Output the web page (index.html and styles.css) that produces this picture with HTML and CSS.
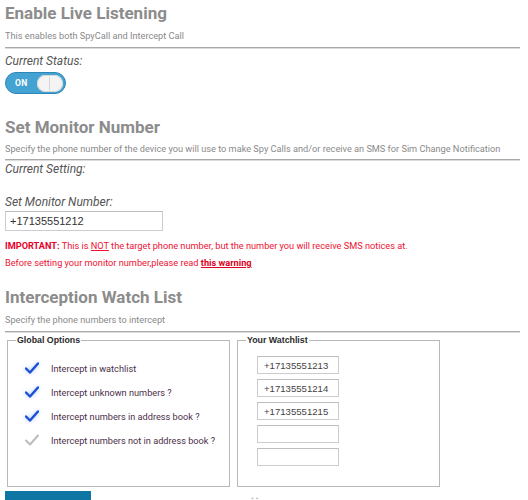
FILE: index.html
```html
<!DOCTYPE html>
<html>
<head>
<meta charset="utf-8">
<link rel="stylesheet" href="styles.css">
</head>
<body>
<div class="page">
  <section class="sec sec-live">
    <h2 class="title">Enable Live Listening</h2>
    <p class="sub">This enables both SpyCall and Intercept Call</p>
    <div class="rule"></div>
    <p class="label">Current Status:</p>
    <div class="toggle"><span class="on">ON</span><span class="knob"></span></div>
  </section>

  <section class="sec sec-monitor">
    <h2 class="title">Set Monitor Number</h2>
    <p class="sub">Specify the phone number of the device you will use to make Spy Calls and/or receive an SMS for Sim Change Notification</p>
    <div class="rule"></div>
    <p class="label label-tight">Current Setting:</p>
    <p class="label label-set">Set Monitor Number:</p>
    <input class="field field-monitor" type="text" value="+17135551212">
    <p class="warn"><b>IMPORTANT:</b> This is <u>NOT</u> the target phone number, but the number you will receive SMS notices at.</p>
    <p class="warn warn2">Before setting your monitor number,please read <a class="warnlink" href="#">this warning</a></p>
  </section>

  <section class="sec sec-watch">
    <h2 class="title">Interception Watch List</h2>
    <p class="sub">Specify the phone numbers to intercept</p>
    <div class="rule"></div>
    <div class="boxes">
      <fieldset class="box box-global">
        <legend>Global Options</legend>
        <ul class="opts">
          <li class="opt"><span class="chk on-chk"><svg viewBox="0 0 14 12" width="14" height="12"><path d="M1 6.5 L5 10.5 L13 1.5" fill="none" stroke="currentColor" stroke-width="2.4" stroke-linecap="round" stroke-linejoin="round"/></svg></span>Intercept in watchlist</li>
          <li class="opt"><span class="chk on-chk"><svg viewBox="0 0 14 12" width="14" height="12"><path d="M1 6.5 L5 10.5 L13 1.5" fill="none" stroke="currentColor" stroke-width="2.4" stroke-linecap="round" stroke-linejoin="round"/></svg></span>Intercept unknown numbers ?</li>
          <li class="opt"><span class="chk on-chk"><svg viewBox="0 0 14 12" width="14" height="12"><path d="M1 6.5 L5 10.5 L13 1.5" fill="none" stroke="currentColor" stroke-width="2.4" stroke-linecap="round" stroke-linejoin="round"/></svg></span>Intercept numbers in address book ?</li>
          <li class="opt"><span class="chk off-chk"><svg viewBox="0 0 14 12" width="14" height="12"><path d="M1 6.5 L5 10.5 L13 1.5" fill="none" stroke="currentColor" stroke-width="2" stroke-linecap="round" stroke-linejoin="round"/></svg></span>Intercept numbers not in address book ?</li>
        </ul>
      </fieldset>
      <fieldset class="box box-list">
        <legend>Your Watchlist</legend>
        <div class="nums">
          <input class="field num" type="text" value="+17135551213">
          <input class="field num" type="text" value="+17135551214">
          <input class="field num" type="text" value="+17135551215">
          <input class="field num" type="text" value="">
          <input class="field num" type="text" value="">
        </div>
      </fieldset>
    </div>
    <div class="actions">
      <button class="save">Save All</button>
      <span class="dots">• •</span>
    </div>
  </section>
</div>
</body>
</html>
```

FILE: styles.css
```css
html, body {
  margin: 0;
  padding: 0;
  background: #ffffff;
}
body {
  font-family: Roboto, "Liberation Sans", sans-serif;
  overflow: hidden;
}
.page {
  padding: 0 8px 0 5px;
}
.sec {
  margin: 0;
}
.title {
  font-family: Roboto, sans-serif;
  font-weight: 700;
  font-size: 17px;
  line-height: 22px;
  color: #8c8c8c;
  margin: 0;
}
.sec-live .title { padding-top: 2px; }
.sec-monitor .title { margin-top: 22px; }
.sec-watch .title { margin-top: 16px; }
.sub {
  font-size: 9.2px;
  line-height: 12px;
  color: #8a8a8a;
  margin: 6px 0 0 0;
}
.sec-monitor .sub { margin-top: 5px; }
.rule {
  height: 1px;
  background: #a9a9a9;
  margin-top: 5px;
  border-bottom: 1px solid #dcdcdc;
}
.sec-monitor .rule { margin-top: 4px; }
.label {
  font-style: italic;
  font-size: 12px;
  line-height: 16px;
  color: #555555;
  margin: 4px 0 0 0;
}
.label-tight { margin-top: 0; }
.label-set { margin-top: 17px; }
.toggle {
  margin-top: 3px;
  width: 61px;
  height: 22px;
  box-sizing: border-box;
  border-radius: 11px;
  background: #45a3d3;
  border: 1px solid #2d86b5;
  display: flex;
  align-items: center;
  justify-content: space-between;
  padding: 0 2px 0 9px;
}
.on {
  color: #ffffff;
  font-size: 8.5px;
  font-weight: 700;
  letter-spacing: 0.3px;
}
.knob {
  width: 26px;
  height: 17px;
  border-radius: 9px;
  background: #f4f4f4;
  box-shadow: inset 0 0 0 1px #d8d8d8;
  position: relative;
}
.knob::after {
  content: "";
  position: absolute;
  left: 12px;
  top: 2px;
  width: 1px;
  height: 13px;
  background: #d6d6d6;
}
.field {
  font-family: "Liberation Sans", Arial, sans-serif;
  font-size: 11px;
  color: #333333;
  box-sizing: border-box;
  border: 1px solid #cccccc;
  border-top-color: #bdbdbd;
  background: #ffffff;
  padding: 0 4px;
  margin: 0;
  outline: none;
}
.field-monitor {
  display: block;
  width: 158px;
  height: 20px;
  margin-top: 1px;
}
.warn {
  color: #ee1133;
  font-size: 9.2px;
  line-height: 14px;
  margin: 8px 0 0 0;
}
.warn b { color: #e8002a; }
.warn2 { margin-top: 3px; }
.warnlink {
  color: #dd0022;
  font-weight: 700;
  text-decoration: underline;
}
.sec-watch .sub { margin-top: 6px; }
.boxes {
  display: flex;
  gap: 7px;
  margin-top: 2px;
  padding-left: 2px;
}
.box {
  margin: 0;
  border: 1px solid #b8b8b8;
  padding: 0;
  box-sizing: border-box;
  height: 152px;
}
.box legend {
  font-family: "Liberation Sans", Arial, sans-serif;
  font-weight: 700;
  font-size: 8.8px;
  color: #2b2b2b;
  padding: 0 1px;
  margin-left: 8px;
}
.box-global { width: 223px; }
.box-list { width: 203px; }
.opts {
  list-style: none;
  margin: 0;
  padding: 11px 0 0 17px;
}
.opt {
  display: flex;
  align-items: center;
  height: 24px;
  font-size: 9.2px;
  color: #4c2f4a;
}
.chk {
  width: 14px;
  height: 12px;
  margin-right: 12px;
  display: inline-flex;
}
.on-chk {
  color: #1a4fd6;
  filter: drop-shadow(0 0 2px rgba(60, 110, 240, 0.45));
}
.off-chk { color: #bcbcbc; }
.nums {
  display: flex;
  flex-direction: column;
  gap: 5px;
  padding: 11px 0 0 19px;
}
.num {
  width: 82px;
  height: 18px;
  font-size: 9.6px;
  padding: 0 6px;
  color: #444444;
}
.actions {
  display: flex;
  align-items: flex-start;
  margin-top: 4px;
}
.save {
  width: 86px;
  height: 24px;
  border: none;
  background: #0f76a3;
  color: #ffffff;
  font-family: Roboto, sans-serif;
  font-size: 11px;
  font-weight: 700;
  padding: 0;
  padding-top: 2px;
  vertical-align: top;
}
.dots {
  margin-left: 160px;
  margin-top: 3px;
  font-size: 8px;
  color: #aaaaaa;
}
```
